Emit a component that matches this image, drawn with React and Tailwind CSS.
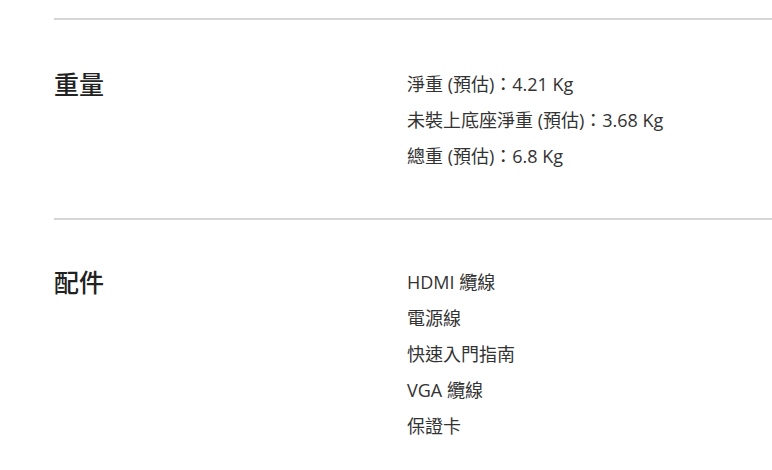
export default function App() {
  const sections = [
    {
      title: "重量",
      rows: ["淨重 (預估)：4.21 Kg", "未裝上底座淨重 (預估)：3.68 Kg", "總重 (預估)：6.8 Kg"],
      pt: "pt-[46px]",
      pb: "pb-[44px]",
    },
    {
      title: "配件",
      rows: ["HDMI 纜線", "電源線", "快速入門指南", "VGA 纜線", "保證卡"],
      pt: "pt-[44px]",
      pb: "pb-[40px]",
    },
  ];
  return (
    <div className="w-[772px] h-[470px] overflow-hidden bg-white pt-[18px] pl-[54px] font-['Open_Sans','Noto_Sans_CJK_TC',sans-serif]">
      {sections.map((s) => (
        <div key={s.title} className={`border-t-2 border-[#d6d6d6] ${s.pt} ${s.pb} flex`}>
          <div className="w-[353px] shrink-0 text-[25px] leading-[36px] font-medium text-[#222]">
            {s.title}
          </div>
          <div className="flex flex-col text-[18px] leading-[36px] text-[#333]">
            {s.rows.map((r) => (
              <div key={r}>{r}</div>
            ))}
          </div>
        </div>
      ))}
    </div>
  );
}
